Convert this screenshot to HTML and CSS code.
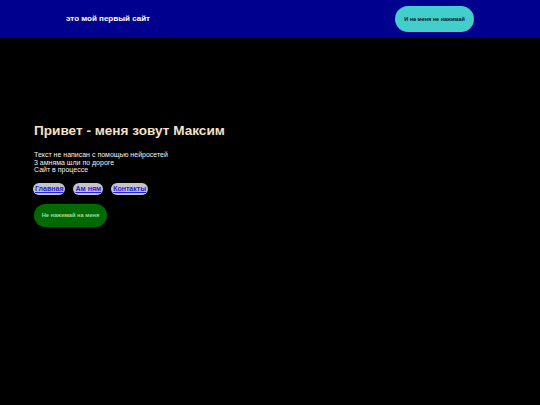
FILE: index.html
```html
<!DOCTYPE html>
<html lang="ru">
<head>
<meta charset="utf-8">
<link rel="stylesheet" href="styles.css">
</head>
<body>
<header class="top">
  <div class="brand">это мой первый сайт</div>
  <button class="top-btn">И на меня не нажимай</button>
</header>
<main class="content">
  <h1 class="title">Привет - меня зовут Максим</h1>
  <p class="text">Текст не написан с помощью нейросетей<br>3 амняма шли по дороге<br>Сайт в процессе</p>
  <nav class="links">
    <a class="link" href="#">Главная</a>
    <a class="link" href="#">Ам ням</a>
    <a class="link" href="#">Контакты</a>
  </nav>
  <button class="green-btn">Не нажимай на меня</button>
</main>
</body>
</html>
```
FILE: styles.css
```css
html, body {
  margin: 0;
  padding: 0;
  background: #000;
  font-family: "Liberation Sans", Arial, sans-serif;
  height: 100%;
}
.top {
  height: 38px;
  background: #00008f;
  display: flex;
  align-items: center;
  justify-content: space-between;
  padding: 0 66px 0 66px;
  box-sizing: border-box;
}
.brand {
  color: #fff;
  font-weight: bold;
  font-size: 8px;
  margin-top: -1px;
}
.top-btn {
  width: 79px;
  height: 26px;
  border: none;
  border-radius: 13px;
  background: #42cfcb;
  color: #0a1530;
  font-family: "Liberation Sans", Arial, sans-serif;
  font-weight: bold;
  font-size: 5.5px;
  padding: 0;
}
.content {
  padding: 0 34px;
  padding-top: 85px;
}
.title {
  margin: 0;
  color: #f3e2c4;
  font-size: 13.6px;
  font-weight: bold;
  line-height: 16px;
}
.text {
  margin: 12px 0 0 0;
  color: #f0f0f0;
  font-size: 7px;
  line-height: 7.5px;
}
.links {
  display: flex;
  gap: 8px;
  margin-top: 9px;
  margin-left: -1px;
}
.link {
  background: #c4c4c8;
  color: #2020e0;
  font-weight: bold;
  font-size: 7px;
  line-height: 12px;
  padding: 0 2px;
  border-radius: 6px;
  text-decoration: underline;
}
.green-btn {
  margin-top: 9px;
  width: 73px;
  height: 23px;
  border: none;
  border-radius: 11.5px;
  background: #006a00;
  color: #a6d89a;
  font-family: "Liberation Sans", Arial, sans-serif;
  font-weight: bold;
  font-size: 5.7px;
  padding: 0;
}
```
